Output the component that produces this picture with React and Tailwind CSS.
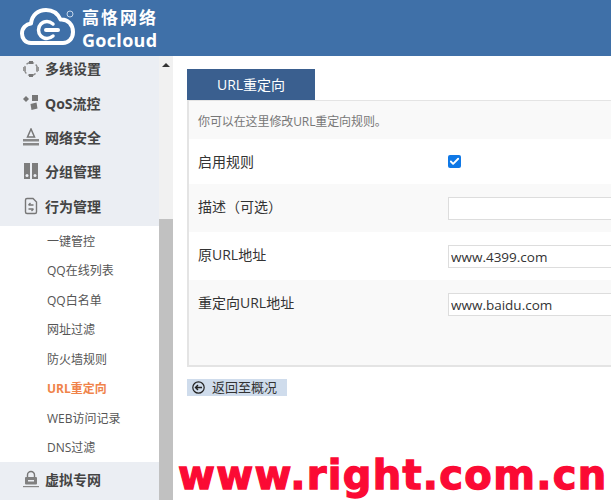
import { Check } from 'lucide-react';

const FONT = 'font-["Open_Sans","Noto_Sans_CJK_SC",sans-serif]';

function CloudLogo() {
  return (
    <svg width="62" height="42" viewBox="0 0 62 42" fill="none" className="shrink-0">
      <path d="M11 36C5 36 2 31 2 26.500C2 21 6 17 11 16.500C12 8 18 3 26 3C33 3 38 7 40.500 12.500C48 12 53 18 53 25C53 32 48 36 43 36Z" stroke="white" strokeWidth="4" strokeLinejoin="round" />
      <path d="M33 17C31 15.300 29.500 14.500 27 14.500C22 14.500 18.500 18.500 18.500 23C18.500 27.500 22 31.500 27 31.500C29.500 31.500 31 30.700 33 29" stroke="white" strokeWidth="3.500" strokeLinecap="round" />
      <path d="M26 23H38" stroke="white" strokeWidth="4" strokeLinecap="round" />
      <circle cx="50" cy="7" r="3" stroke="#c5d6ea" strokeWidth="1" />
    </svg>
  );
}

function MultiIcon() {
  return (
    <svg width="18" height="18" viewBox="0 0 18 18" fill="none">
      <circle cx="9" cy="9" r="6.500" stroke="#8a8a8a" strokeWidth="1.400" strokeDasharray="3 2" />
      <rect x="7" y="1" width="4" height="3" fill="#777" />
      <rect x="7" y="14" width="4" height="3" fill="#777" />
      <rect x="1" y="7" width="3" height="4" fill="#999" />
      <rect x="14" y="7" width="3" height="4" fill="#999" />
    </svg>
  );
}

function QosIcon() {
  return (
    <svg width="18" height="18" viewBox="0 0 18 18" fill="#777">
      <path d="M4 2l3 3-3 3-3-3z" />
      <rect x="10" y="1" width="6" height="6" />
      <path d="M8.500 10l6-1.500 1 6-6 1.500z" />
    </svg>
  );
}

function SecurityIcon() {
  return (
    <svg width="18" height="18" viewBox="0 0 18 18" fill="none">
      <path d="M9 1L5.500 9h7z" stroke="#777" strokeWidth="1.500" />
      <rect x="1" y="11" width="16" height="2.500" fill="#888" />
      <rect x="1" y="15" width="16" height="2.500" fill="#888" />
    </svg>
  );
}

function GroupIcon() {
  return (
    <svg width="18" height="18" viewBox="0 0 18 18" fill="#7d7d7d">
      <rect x="2" y="1" width="6" height="16" />
      <rect x="10" y="1" width="6" height="16" />
      <circle cx="5" cy="13.500" r="1.500" fill="#ebeef3" />
      <circle cx="13" cy="13.500" r="1.500" fill="#ebeef3" />
    </svg>
  );
}

function BehaviorIcon() {
  return (
    <svg width="18" height="18" viewBox="0 0 18 18" fill="none" stroke="#777">
      <path d="M5 1.500h6l3.500 3.500v10a1.500 1.500 0 0 1-1.500 1.500H5A1.500 1.500 0 0 1 3.500 15V3A1.500 1.500 0 0 1 5 1.500z" strokeWidth="1.400" />
      <path d="M6.500 8h5M6.500 8l2-2M11.500 12h-5M11.500 12l-2 2" strokeWidth="1.300" />
    </svg>
  );
}

function VpnIcon() {
  return (
    <svg width="18" height="18" viewBox="0 0 18 18" fill="none">
      <path d="M5.500 7V5a3.500 3.500 0 0 1 7 0v2" stroke="#777" strokeWidth="1.400" />
      <rect x="3" y="7" width="12" height="7.500" rx="1" fill="#808080" />
      <rect x="6" y="10" width="6" height="1.500" fill="#ebeef3" />
      <rect x="1" y="16" width="16" height="1.200" fill="#888" />
    </svg>
  );
}

function NavGroup({ icon, label, h = 'h-[34px]' }) {
  return (
    <div className={`flex items-center pl-[22px] gap-[5px] text-[14px] font-bold text-[#444] ${h}`}>
      <span className="w-[18px] flex justify-center shrink-0">{icon}</span>
      <span>{label}</span>
    </div>
  );
}

function SubItem({ label, active }) {
  return (
    <div className={`h-[29.500px] flex items-center pl-[47px] text-[12px] ${active ? 'font-bold text-[#f0834a]' : 'text-[#555]'}`}>
      {label}
    </div>
  );
}

function Row({ label, bg, h, children, labelPad = 'pb-[4px]' }) {
  return (
    <div className={`flex items-center ${bg} ${h}`}>
      <div className={`w-[259px] pl-[9px] shrink-0 text-[14px] text-[#333] ${labelPad}`}>{label}</div>
      <div className="flex-1 min-w-0">{children}</div>
    </div>
  );
}

function TextField({ value }) {
  return (
    <input
      readOnly
      value={value}
      className="block w-[300px] h-[23px] bg-white border border-[#ddd] px-[2px] pt-[1px] text-[13.500px] text-[#333] outline-none"
    />
  );
}

export default function App() {
  return (
    <div className={`relative w-[611px] h-[500px] overflow-hidden bg-white flex flex-col ${FONT}`}>
      <header className="h-[56px] shrink-0 bg-[#3f70a8] flex items-center pl-[20px]">
        <CloudLogo />
        <div className="text-white leading-none pt-[1px]">
          <div className="text-[17px] font-bold tracking-[2px] mb-[5px]">高恪网络</div>
          <div className="text-[18px] font-bold tracking-[0.300px]">Gocloud</div>
        </div>
      </header>

      <div className="flex flex-1 min-h-0">
        <aside className="w-[173px] shrink-0 flex">
          <nav className="w-[159px] flex flex-col">
            <div className="bg-[#ebeef3]">
              <NavGroup icon={<MultiIcon />} label="多线设置" h="h-[30px] pb-[5px]" />
              <NavGroup icon={<QosIcon />} label="QoS流控" />
              <NavGroup icon={<SecurityIcon />} label="网络安全" />
              <NavGroup icon={<GroupIcon />} label="分组管理" />
              <NavGroup icon={<BehaviorIcon />} label="行为管理" h="h-[38px] pb-[2px]" />
            </div>
            <div className="bg-white h-[236px] pt-[1px]">
              <SubItem label="一键管控" />
              <SubItem label="QQ在线列表" />
              <SubItem label="QQ白名单" />
              <SubItem label="网址过滤" />
              <SubItem label="防火墙规则" />
              <SubItem label="URL重定向" active />
              <SubItem label="WEB访问记录" />
              <SubItem label="DNS过滤" />
            </div>
            <div className="bg-[#ebeef3] flex-1">
              <NavGroup icon={<VpnIcon />} label="虚拟专网" />
            </div>
          </nav>
          <div className="w-[14px] bg-[#f1f1f1] flex flex-col">
            <div className="h-[163px] flex justify-center pt-[7px]">
              <div className="w-0 h-0 border-x-[4px] border-x-transparent border-b-[4px] border-b-[#333]" />
            </div>
            <div className="flex-1 bg-[#c1c1c1]" />
          </div>
        </aside>

        <main className="flex-1 min-w-0 pl-[14px] pt-[13px]">
          <div className="w-[128px] h-[31px] bg-[#3a5f8f] text-white text-[14px] flex items-center justify-center">
            URL重定向
          </div>
          <div className="border-l-2 border-y border-b-2 border-[#e4e4e4] h-[267px] flex flex-col bg-[#f9f9f9] -mr-[20px]">
            <div className="h-[38px] shrink-0 flex items-center pl-[9px] pt-[3px] text-[12px] tracking-[-0.100px] text-[#777]">
              你可以在这里修改URL重定向规则。
            </div>
            <Row label="启用规则" bg="bg-white" h="h-[45px]" labelPad="pb-[1px]">
              <span className="flex items-center justify-center w-[13px] h-[13px] rounded-[2px] bg-[#0f78e6]">
                <Check size={11} strokeWidth={4} color="white" />
              </span>
            </Row>
            <Row label="描述（可选）" bg="bg-[#f9f9f9]" h="h-[48px]">
              <TextField value="" />
            </Row>
            <Row label="原URL地址" bg="bg-white" h="h-[48px]">
              <TextField value="www.4399.com" />
            </Row>
            <Row label="重定向URL地址" bg="bg-[#f9f9f9]" h="h-[48px]">
              <TextField value="www.baidu.com" />
            </Row>
          </div>
          <div className="mt-[12px] w-[100px] h-[17px] bg-[#cfdcec] flex items-center pl-[5px] gap-[7px] text-[13px] text-[#333]">
            <svg width="13" height="13" viewBox="0 0 13 13" fill="none" stroke="#222" className="shrink-0">
              <circle cx="6.500" cy="6.500" r="5.700" strokeWidth="1.200" />
              <path d="M10 6.500H3.500M6 4L3.500 6.500 6 9" strokeWidth="1.400" />
            </svg>
            <span>返回至概况</span>
          </div>
        </main>
      </div>

      <div className="absolute left-[178px] top-[447px] font-['DejaVu_Sans',sans-serif] font-bold text-[40px] leading-[56px] tracking-[1.300px] text-[#fb0a34] whitespace-nowrap [-webkit-text-stroke:1.300px_#fb0a34]">
        www.right.com.cn
      </div>
    </div>
  );
}
